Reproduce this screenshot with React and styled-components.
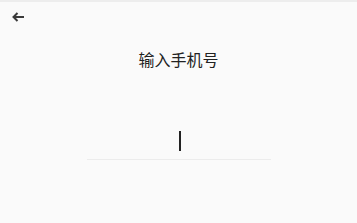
import React from 'react'
import styled, { createGlobalStyle } from 'styled-components'

const GlobalStyle = createGlobalStyle`
    html, body {
        margin: 0;
        padding: 0;
        background: #fafafa;
        font-family: "Noto Sans CJK SC", "Noto Sans", sans-serif;
    }
`

const Screen = styled.div`
    width: 357px;
    height: 223px;
    box-sizing: border-box;
    border-top: 2px solid #ededed;
    display: flex;
    flex-direction: column;
    align-items: center;
`

const TopBar = styled.div`
    align-self: stretch;
    height: 28px;
    display: flex;
    align-items: center;
    padding-left: 12px;
`

const BackButton = styled.button`
    border: none;
    background: none;
    padding: 0;
    width: 12px;
    height: 10px;
    margin-top: 1px;
    display: flex;
    color: #3a3a3a;
    cursor: pointer;
`

const Title = styled.h1`
    margin: 20px 0 0;
    font-size: 16px;
    line-height: 18px;
    font-weight: 400;
    color: #222;
`

const InputBox = styled.div`
    margin-top: 63px;
    width: 182px;
    height: 28px;
    border-bottom: 1px solid #ececec;
    display: flex;
    justify-content: center;
    padding-left: 2px;
`

const Caret = styled.span`
    width: 2px;
    height: 20px;
    background: #222;
`

const App = () => {
    return (
        <>
            <GlobalStyle />
            <Screen>
                <TopBar>
                    <BackButton aria-label="返回">
                        <svg width="12" height="10" viewBox="0 0 12 10" fill="none" stroke="currentColor" strokeWidth="2">
                            <path d="M5.5 1 L1.5 5 L5.5 9" />
                            <path d="M1.5 5 H12" />
                        </svg>
                    </BackButton>
                </TopBar>
                <Title>输入手机号</Title>
                <InputBox>
                    <Caret />
                </InputBox>
            </Screen>
        </>
    )
}

export default App
